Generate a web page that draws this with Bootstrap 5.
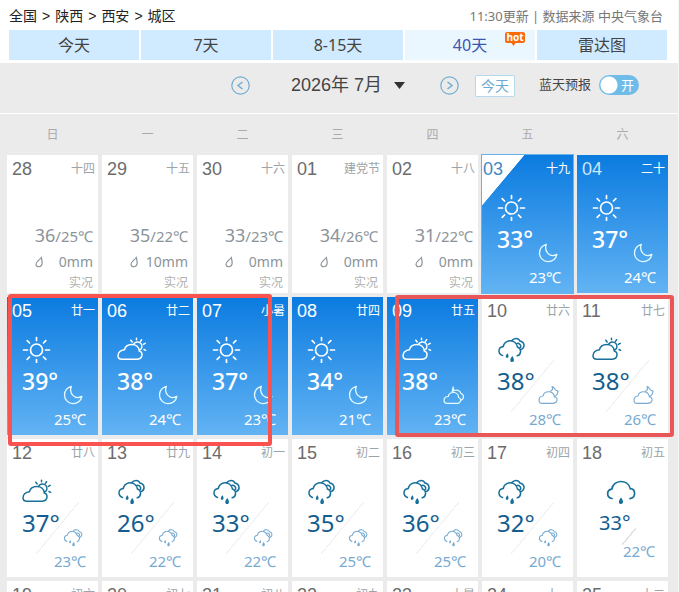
<!DOCTYPE html>
<html lang="zh-CN">
<head>
<meta charset="utf-8">
<meta name="viewport" content="width=device-width, initial-scale=1">
<title>西安城区 40天天气预报</title>
<link rel="stylesheet" href="https://cdn.jsdelivr.net/npm/bootstrap@5.3.0/dist/css/bootstrap.min.css">
<style>
body{font-family:"Noto Sans","Noto Sans CJK SC",sans-serif;font-size:14px;color:#222;background:#fff}
a,a:hover{color:inherit;text-decoration:none}
.page{border-right:1px solid #f6f6f6;background:#ebebeb}
.masthead{background:#fff;padding:2px 11px 3px 9px}
.crumbs{height:28px;line-height:28px}
.crumbs .breadcrumb-item{padding:0}
.crumbs .breadcrumb-item+.breadcrumb-item::before{content:">";padding:0 5px;color:#222;font-family:"Liberation Sans",sans-serif}
.source{font-size:13px;color:#777}
.tabs{gap:2px}
.tabs .nav-link{padding:0;line-height:30px;font-size:16px;color:#444;background:#d0eaff;border-radius:0}
.tabs .nav-link.active{background:#ebf7ff;color:#3b55b0}
.hot{position:absolute;top:2px;right:10px;overflow:visible}
.hot text{font:bold 10px "Open Sans",sans-serif}
.toolbar-row{height:51px;padding:0 39px 6px 9px;border-bottom:1px solid #fff}
.round{width:19px;height:19px}
.month{font:18px "Liberation Sans","Noto Sans CJK SC",sans-serif;width:114px;color:#444;appearance:none;margin:0 35px 0 41px;
 background:url("data:image/svg+xml,%3Csvg xmlns='http://www.w3.org/2000/svg' width='11' height='7'%3E%3Cpath d='M0 0h11L5.5 7z' fill='%23333'/%3E%3C/svg%3E") no-repeat right center}
.today{width:40px;height:22px;margin:1px 24px 0 16px;font-size:14px;line-height:20px;color:#69a9d3;background:#fff;border:1px solid #b5d9ed;border-radius:2px}
.bluesky{font-size:13px;color:#444}
.switch-box{width:40px;height:20px}
.switch-box input{appearance:none;width:100%;height:20px;border-radius:10px;background:radial-gradient(circle at 10px 10px,#fff 8px,#6fbce9 9px)}
.switch-box span{position:absolute;right:5px;top:0;line-height:20px;color:#fff;pointer-events:none}
.calendar{padding:0 6px 0 3px}
.days{border-collapse:separate;border-spacing:4px;table-layout:fixed}
.days th{height:33px;font-size:12px;font-weight:400;color:#aaa;text-align:center}
.days td{height:138px;padding:0;vertical-align:top;background:#fff;color:#77aad0}
.date-line{height:28px;line-height:28px;padding:0 3px 0 5px}
.date-line b{font:18px/28px "Liberation Sans",sans-serif;color:#6c6c6c}
.date-line span{font-size:12px;color:#9ba4a8}
.past{padding:40px 5px 0 0;color:#8b949a;text-align:right}
.past p{margin:0;line-height:25px}
.past .range{font-size:15px}
.past big{font-size:18px}
.past .state{font-size:12px;line-height:18px;color:#b0b0b0}
.past svg{width:8px;height:12px}
.sky{padding:10px 14px 0 15px}
.ico{display:block;width:30px;height:28px}
.pair{height:42px}
.high{font-size:24px;line-height:36px;font-weight:400;color:#135d8f}
.low{font-size:15px;line-height:28px;text-align:right;margin-right:-2px}
.day-col{color:#17709a}
.ico-s{width:21px;height:20px;flex:none}
.days td.fc{background:linear-gradient(to bottom right,transparent 49%,#f1f3f5 49%,#f1f3f5 51%,transparent 51%) no-repeat 29px 63px/43px 52px #fff}
.days td.fc.short{background-position:45px 89px;background-size:14px 17px;background-image:linear-gradient(to bottom right,transparent 46%,#dde2e6 47%,#dde2e6 53%,transparent 54%)}
.days td.hotday{background:linear-gradient(#0b7be0,#62b3f3);color:#e6fbff}
.hotday .day-col,.hotday .high,.hotday .low,.hotday .date-line b,.hotday .date-line span{color:#fff}
.hotday .high{font-size:23px;font-weight:500}
.hotday.dim .date-line b{color:#cfe5f8}
.days td.now{background:linear-gradient(to bottom right,#fff 50%,transparent 51%) no-repeat 0 0/42px 50px,linear-gradient(#0b7be0,#62b3f3);box-shadow:0 0 0 1px #66b2ea}
.now .date-line{padding-left:1px}
.hotday.now .date-line b{color:#4189c2}
.single{padding:10px 13px 0 22px}
.single .ico{margin-left:7px}
.single .high{font-size:20px}
.single .low{line-height:20px;margin:0}
.marker{position:absolute;border:4px solid #fa524f;border-radius:3px;pointer-events:none}
.marker-a{left:8px;top:180px;width:264px;height:152px}
.marker-b{left:395px;top:181px;width:279px;height:142px;border-color:#e95657}
</style>
</head>
<body class="overflow-hidden">
<svg class="d-none" aria-hidden="true">
<symbol id="sun" viewBox="0 0 30 28"><g fill="none" stroke="currentColor" stroke-width="1.7" stroke-linecap="round"><circle cx="14.500" cy="15" r="6"/><path d="M14.500 2.500v3M14.500 24.500v3M1.500 15h4M23.500 15h4M5.200 5.700l2.300 2.300M21.500 22l2.300 2.300M23.800 5.700L21.500 8M7.500 22l-2.300 2.300"/></g></symbol>
<symbol id="cloudsun" viewBox="0 0 30 28"><g fill="none" stroke="currentColor" stroke-width="1.5" stroke-linecap="round"><path d="M5 24.2H20.5C26 23.8 26.3 17.3 22.3 16C22 11.5 18.500 9.400 14.800 9.400C10.800 9.400 8 11.700 7.400 14.800C3.300 15 1 18 1 20.700C1 22.800 2.700 24.200 5 24.200zM16.700 9.200C18 6.500 22 6 24 8.600C25.800 11 25 14 22.600 14.900"/><path d="M13.800 5.200l1.400 1.700M19.500 3.200v1.600M24.600 4.700l-1.100 1.700M28.200 8.400l-1.900 1M27 14.500l1.600.8"/></g></symbol>
<symbol id="rain" viewBox="0 0 30 28"><g fill="none" stroke="currentColor" stroke-width="1.5" stroke-linecap="round"><path d="M5.500 20.500C.6 18.500 .8 12.300 6.200 11.500C7 6.800 11.800 4.800 16 6.400C18.600 7.500 20 9.400 20.400 12C25 13.600 24.300 19.700 20.200 20.800M14.600 5.800C17 2.700 21.500 2.700 22.900 6C27.800 6.800 28.300 12.400 24.600 14.400M19.200 8.600C21.800 7.600 24.300 9.600 23.600 12.200"/></g><g fill="currentColor"><path d="M10.500 18.200c1.300 2 1.600 4.500-.3 4.600s-2-2.300.3-4.600zM15.300 21c2.200 2.900 2.300 6-.1 6.100s-2.700-2.800.1-6.100z"/></g></symbol>
<symbol id="rainone" viewBox="0 0 30 28"><path d="M6 21.500C.2 20.600.3 13 5.800 12.200C6.800 2.500 22.200 1.600 24.200 11.700C30 12.200 30.100 20.400 24 21.600" fill="none" stroke="currentColor" stroke-width="1.700" stroke-linecap="round"/><path d="M15 20.500c2.800 3.600 2.800 6.300 0 6.400s-2.800-2.800 0-6.400z" fill="currentColor"/></symbol>
<symbol id="moon" viewBox="0 0 21 20"><path d="M8.300 1.400C3.700 2.800 1.500 6.300 1.500 10.200A8.600 8.600 0 0 0 10 18.600C14.300 18.600 17.800 16.200 18.900 11.400C15.600 13.300 12 12.600 9.700 10.100C7.500 7.600 7.100 4.500 8.300 1.400z" fill="none" stroke="currentColor" stroke-width="1.300" stroke-linejoin="round"/></symbol>
<symbol id="cloudmoon" viewBox="0 0 21 20"><path d="M4 18.400H14.300C20.200 18.200 20.300 12.800 16.400 11.800C15.800 8.600 13.200 6.800 10.500 6.800C7.600 6.800 5.500 8.600 5.100 11C2.600 11.200 1 13.200 1 15.300C1 17.200 2.300 18.400 4 18.400zM12 6.600C14.500 5.800 15 3.600 14 1.600C17.500 2.200 16.400 6.800 20 5.800C20 8.600 18.800 10.400 16.600 11.400" fill="none" stroke="currentColor" stroke-width="1.100" stroke-linejoin="round"/></symbol>
<symbol id="cloudnight" viewBox="0 0 21 20"><path d="M4 18.400H14.300C18.200 18.200 18.700 13.500 15.600 12.500C15.400 9.300 13 7.500 10.500 7.500C7.600 7.500 5.700 9.200 5.300 11.400C2.600 11.600 1 13.500 1 15.600C1 17.300 2.300 18.400 4 18.400zM12 5.500C15 4.600 17.300 6 17.800 8.400C21.500 9.600 21.300 14 17.900 15.400" fill="none" stroke="currentColor" stroke-width="1.200"/><path d="M8.300 7.500L10 .5L12 6z" fill="currentColor"/></symbol>
<symbol id="drop" viewBox="0 0 8 12"><path d="M6.300 1.500C6.800 3.800 7.500 6 7 8.200C6.200 11.600 1.500 11.500 1 8.400C.8 6.100 4 4.400 6.300 1.500z" fill="none" stroke="currentColor" stroke-width="1.200"/></symbol>
</svg>
<div class="page vh-100 overflow-hidden">
<header class="masthead">
 <div class="d-flex justify-content-between crumbs">
  <nav aria-label="位置"><ol class="breadcrumb m-0 ps-0">
   <li class="breadcrumb-item"><a href="#">全国</a></li><li class="breadcrumb-item"><a href="#">陕西</a></li><li class="breadcrumb-item"><a href="#">西安</a></li><li class="breadcrumb-item"><a href="#">城区</a></li>
  </ol></nav>
  <div class="source pe-1">11:30更新 | 数据来源 中央气象台</div>
 </div>
 <nav class="nav nav-justified flex-nowrap tabs">
  <a class="nav-link" href="#">今天</a><a class="nav-link" href="#">7天</a><a class="nav-link" href="#">8-15天</a>
  <a class="nav-link active position-relative" href="#" aria-current="page">40天<svg class="hot" width="20" height="15"><path d="M2 0h16q2 0 2 2v7q0 2-2 2h-7.500l-2 3-2-3H2q-2 0-2-2V2q0-2 2-2z" fill="#f96a08"/><text x="10" y="9" text-anchor="middle" fill="#fff">hot</text></svg></a>
  <a class="nav-link" href="#">雷达图</a>
 </nav>
</header>
<div class="toolbar-row d-flex align-items-center justify-content-end">
 <button type="button" class="btn p-0 border-0 d-flex" aria-label="上个月"><svg class="round" viewBox="0 0 19 19" fill="none" stroke="#73add0"><circle cx="9.500" cy="9.500" r="8.700" stroke-width="1.200"/><path d="M11.500 6L7 9.500l4.500 3.500" stroke-width="1.500"/></svg></button>
 <select class="month border-0 p-0" aria-label="月份"><option>2026年 7月</option></select>
 <button type="button" class="btn p-0 border-0 d-flex" aria-label="下个月"><svg class="round" viewBox="0 0 19 19" fill="none" stroke="#73add0"><circle cx="9.500" cy="9.500" r="8.700" stroke-width="1.200"/><path d="M7.500 6L12 9.500 7.500 13" stroke-width="1.500"/></svg></button>
 <button type="button" class="today p-0">今天</button>
 <label class="bluesky d-flex align-items-center" for="sky">蓝天预报<span class="switch-box position-relative d-flex ms-2"><input type="checkbox" role="switch" id="sky" checked><span>开</span></span></label>
</div>
<main class="calendar position-relative">
<table class="days w-100">
<thead><tr><th scope="col">日</th><th scope="col">一</th><th scope="col">二</th><th scope="col">三</th><th scope="col">四</th><th scope="col">五</th><th scope="col">六</th></tr></thead>
<tbody>
<tr>
<td><div class="date-line d-flex justify-content-between"><b>28</b><span>十四</span></div><div class="past"><p class="range"><big>36</big>/25℃</p><p class="d-flex justify-content-between align-items-center ps-4 ms-1"><svg><use href="#drop"/></svg>0mm</p><p class="state">实况</p></div></td>
<td><div class="date-line d-flex justify-content-between"><b>29</b><span>十五</span></div><div class="past"><p class="range"><big>35</big>/22℃</p><p class="d-flex justify-content-between align-items-center ps-4 ms-1"><svg><use href="#drop"/></svg>10mm</p><p class="state">实况</p></div></td>
<td><div class="date-line d-flex justify-content-between"><b>30</b><span>十六</span></div><div class="past"><p class="range"><big>33</big>/23℃</p><p class="d-flex justify-content-between align-items-center ps-4 ms-1"><svg><use href="#drop"/></svg>0mm</p><p class="state">实况</p></div></td>
<td><div class="date-line d-flex justify-content-between"><b>01</b><span>建党节</span></div><div class="past"><p class="range"><big>34</big>/26℃</p><p class="d-flex justify-content-between align-items-center ps-4 ms-1"><svg><use href="#drop"/></svg>0mm</p><p class="state">实况</p></div></td>
<td><div class="date-line d-flex justify-content-between"><b>02</b><span>十八</span></div><div class="past"><p class="range"><big>31</big>/22℃</p><p class="d-flex justify-content-between align-items-center ps-4 ms-1"><svg><use href="#drop"/></svg>0mm</p><p class="state">实况</p></div></td>
<td class="hotday now"><div class="date-line d-flex justify-content-between"><b>03</b><span>十九</span></div><div class="sky"><svg class="ico day-col"><use href="#sun"/></svg><div class="pair d-flex justify-content-between"><span class="high">33°</span><svg class="ico-s align-self-end"><use href="#moon"/></svg></div><div class="low">23℃</div></div></td>
<td class="hotday dim"><div class="date-line d-flex justify-content-between"><b>04</b><span>二十</span></div><div class="sky"><svg class="ico day-col"><use href="#sun"/></svg><div class="pair d-flex justify-content-between"><span class="high">37°</span><svg class="ico-s align-self-end"><use href="#moon"/></svg></div><div class="low">24℃</div></div></td>
</tr>
<tr>
<td class="hotday"><div class="date-line d-flex justify-content-between"><b>05</b><span>廿一</span></div><div class="sky"><svg class="ico day-col"><use href="#sun"/></svg><div class="pair d-flex justify-content-between"><span class="high">39°</span><svg class="ico-s align-self-end"><use href="#moon"/></svg></div><div class="low">25℃</div></div></td>
<td class="hotday"><div class="date-line d-flex justify-content-between"><b>06</b><span>廿二</span></div><div class="sky"><svg class="ico day-col"><use href="#cloudsun"/></svg><div class="pair d-flex justify-content-between"><span class="high">38°</span><svg class="ico-s align-self-end"><use href="#moon"/></svg></div><div class="low">24℃</div></div></td>
<td class="hotday"><div class="date-line d-flex justify-content-between"><b>07</b><span>小暑</span></div><div class="sky"><svg class="ico day-col"><use href="#sun"/></svg><div class="pair d-flex justify-content-between"><span class="high">37°</span><svg class="ico-s align-self-end"><use href="#moon"/></svg></div><div class="low">23℃</div></div></td>
<td class="hotday"><div class="date-line d-flex justify-content-between"><b>08</b><span>廿四</span></div><div class="sky"><svg class="ico day-col"><use href="#sun"/></svg><div class="pair d-flex justify-content-between"><span class="high">34°</span><svg class="ico-s align-self-end"><use href="#moon"/></svg></div><div class="low">21℃</div></div></td>
<td class="hotday"><div class="date-line d-flex justify-content-between"><b>09</b><span>廿五</span></div><div class="sky"><svg class="ico day-col"><use href="#cloudsun"/></svg><div class="pair d-flex justify-content-between"><span class="high">38°</span><svg class="ico-s align-self-end"><use href="#cloudnight"/></svg></div><div class="low">23℃</div></div></td>
<td class="fc"><div class="date-line d-flex justify-content-between"><b>10</b><span>廿六</span></div><div class="sky"><svg class="ico day-col"><use href="#rain"/></svg><div class="pair d-flex justify-content-between"><span class="high">38°</span><svg class="ico-s align-self-end"><use href="#cloudmoon"/></svg></div><div class="low">28℃</div></div></td>
<td class="fc"><div class="date-line d-flex justify-content-between"><b>11</b><span>廿七</span></div><div class="sky"><svg class="ico day-col"><use href="#cloudsun"/></svg><div class="pair d-flex justify-content-between"><span class="high">38°</span><svg class="ico-s align-self-end"><use href="#cloudmoon"/></svg></div><div class="low">26℃</div></div></td>
</tr>
<tr>
<td class="fc"><div class="date-line d-flex justify-content-between"><b>12</b><span>廿八</span></div><div class="sky"><svg class="ico day-col"><use href="#cloudsun"/></svg><div class="pair d-flex justify-content-between"><span class="high">37°</span><svg class="ico-s align-self-end"><use href="#rain"/></svg></div><div class="low">23℃</div></div></td>
<td class="fc"><div class="date-line d-flex justify-content-between"><b>13</b><span>廿九</span></div><div class="sky"><svg class="ico day-col"><use href="#rain"/></svg><div class="pair d-flex justify-content-between"><span class="high">26°</span><svg class="ico-s align-self-end"><use href="#rain"/></svg></div><div class="low">22℃</div></div></td>
<td class="fc"><div class="date-line d-flex justify-content-between"><b>14</b><span>初一</span></div><div class="sky"><svg class="ico day-col"><use href="#rain"/></svg><div class="pair d-flex justify-content-between"><span class="high">33°</span><svg class="ico-s align-self-end"><use href="#rain"/></svg></div><div class="low">22℃</div></div></td>
<td class="fc"><div class="date-line d-flex justify-content-between"><b>15</b><span>初二</span></div><div class="sky"><svg class="ico day-col"><use href="#rain"/></svg><div class="pair d-flex justify-content-between"><span class="high">35°</span><svg class="ico-s align-self-end"><use href="#rain"/></svg></div><div class="low">25℃</div></div></td>
<td class="fc"><div class="date-line d-flex justify-content-between"><b>16</b><span>初三</span></div><div class="sky"><svg class="ico day-col"><use href="#rain"/></svg><div class="pair d-flex justify-content-between"><span class="high">36°</span><svg class="ico-s align-self-end"><use href="#rain"/></svg></div><div class="low">25℃</div></div></td>
<td class="fc"><div class="date-line d-flex justify-content-between"><b>17</b><span>初四</span></div><div class="sky"><svg class="ico day-col"><use href="#rain"/></svg><div class="pair d-flex justify-content-between"><span class="high">32°</span><svg class="ico-s align-self-end"><use href="#rain"/></svg></div><div class="low">20℃</div></div></td>
<td class="fc short"><div class="date-line d-flex justify-content-between"><b>18</b><span>初五</span></div><div class="single"><svg class="ico day-col"><use href="#rainone"/></svg><div class="high">33°</div><div class="low">22℃</div></div></td>
</tr>
<tr>
<td><div class="date-line d-flex justify-content-between"><b>19</b><span>初六</span></div></td>
<td><div class="date-line d-flex justify-content-between"><b>20</b><span>初七</span></div></td>
<td><div class="date-line d-flex justify-content-between"><b>21</b><span>初八</span></div></td>
<td><div class="date-line d-flex justify-content-between"><b>22</b><span>初九</span></div></td>
<td><div class="date-line d-flex justify-content-between"><b>23</b><span>大暑</span></div></td>
<td><div class="date-line d-flex justify-content-between"><b>24</b><span>十一</span></div></td>
<td><div class="date-line d-flex justify-content-between"><b>25</b><span>十二</span></div></td>
</tr>
</tbody>
</table>
<div class="marker marker-a"></div>
<div class="marker marker-b"></div>
</main>
</div>
<script src="https://cdn.jsdelivr.net/npm/bootstrap@5.3.0/dist/js/bootstrap.bundle.min.js"></script>
</body>
</html>
